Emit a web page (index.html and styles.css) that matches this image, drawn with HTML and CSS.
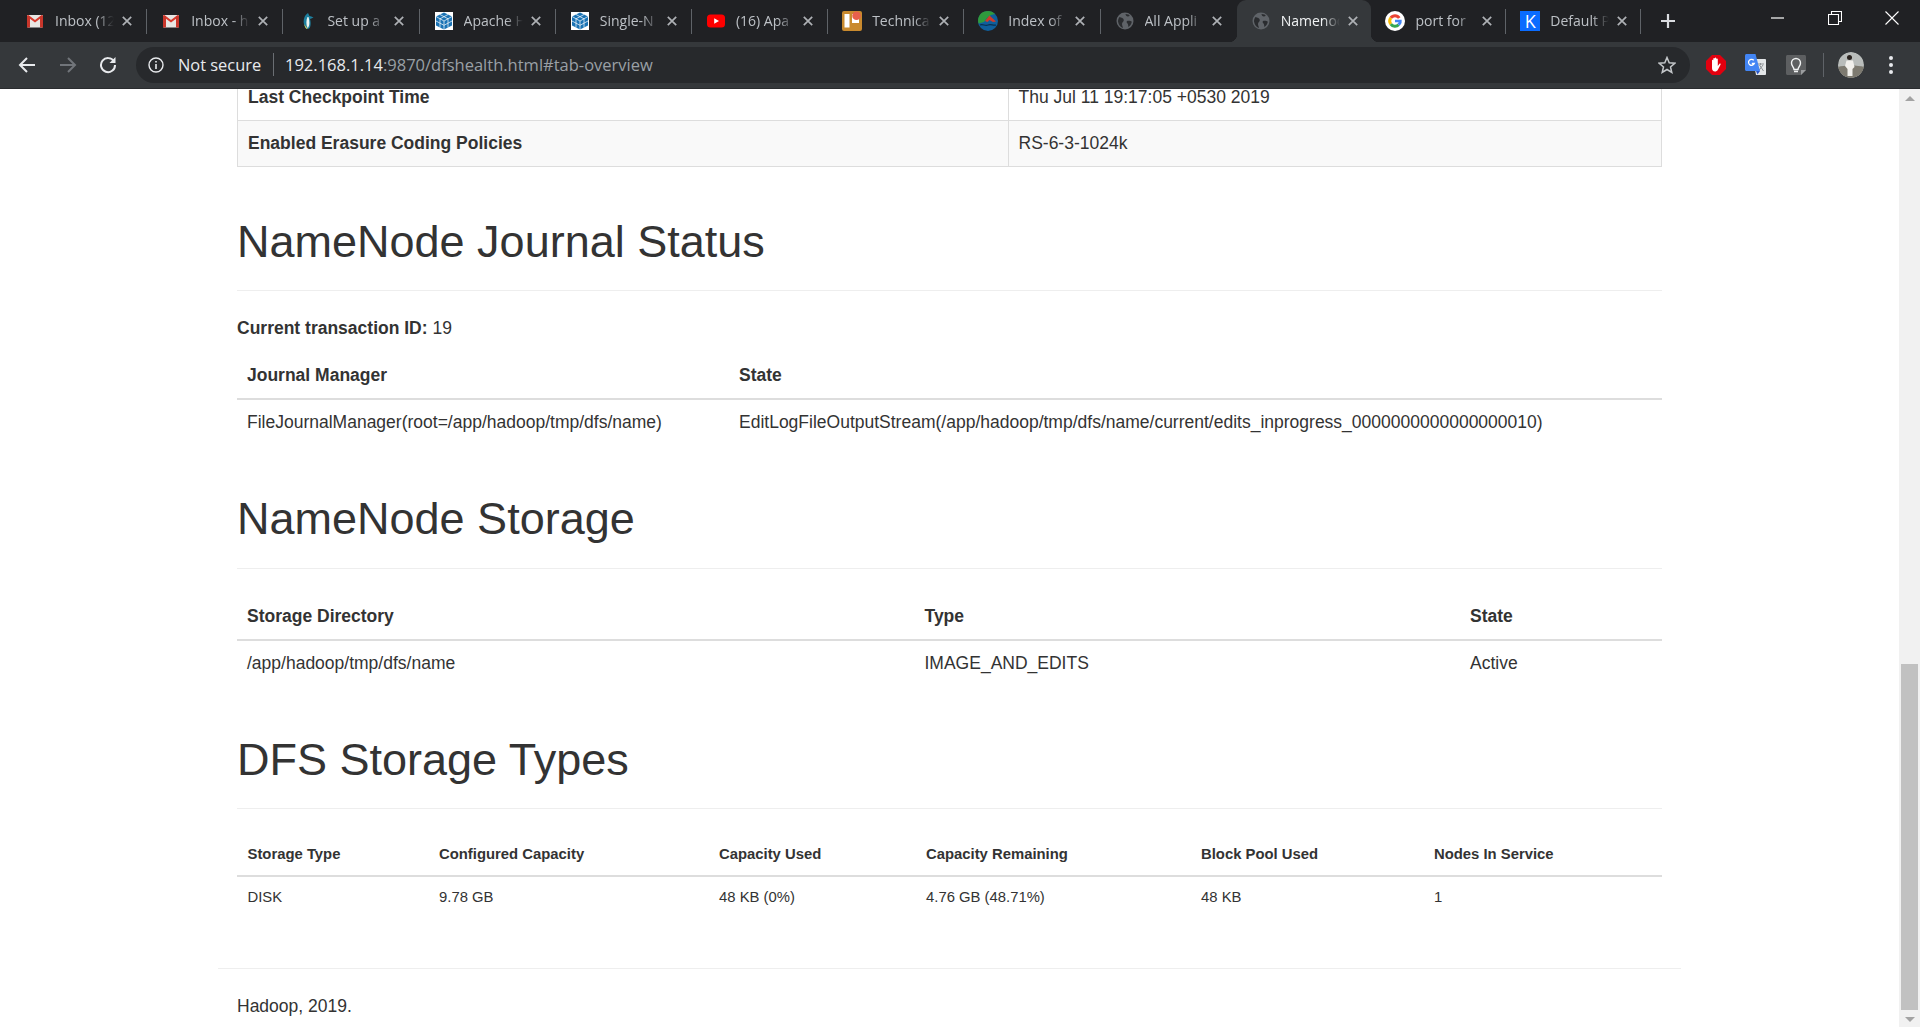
FILE: index.html
```html
<!DOCTYPE html>
<html lang="en">
<head>
<meta charset="UTF-8" />
<title>Namenode information</title>
<link rel="stylesheet" href="styles.css">
</head>
<body>

<svg class="defs" width="0" height="0">
	<symbol id="ico-gmail" viewBox="0 0 18 18">
		<rect x="1" y="3" width="16" height="12.5" rx="1" fill="#e8e6e3"/>
		<path d="M1 4.5 9 10.5 17 4.5V3.500L15.600 3 9 8 2.400 3 1 3.500Z" fill="#d8392c"/>
		<rect x="1" y="4" width="3" height="11.500" fill="#c9362b"/>
		<rect x="14" y="4" width="3" height="11.500" fill="#c9362b"/>
	</symbol>
	<symbol id="ico-cube" viewBox="0 0 18 18">
		<rect width="18" height="18" fill="#fff"/>
		<path d="M9 .5 17 4.500V13.500L9 17.500 1 13.500V4.500Z" fill="#1a73b5"/>
		<path d="M1 4.500 9 9 17 4.500M9 9V17.500M5 2.500 13 6.800M13 2.500 5 6.800M5 6.800V15.500M13 6.800V15.500M1 9 9 13.300 17 9" fill="none" stroke="#fff" stroke-width=".7"/>
	</symbol>
	<symbol id="ico-globe" viewBox="0 0 18 18">
		<circle cx="9" cy="9" r="8.500" fill="#5f6368"/>
		<path d="M3.500 5C5.500 5.500 7.500 6 7.800 8 8 9.800 6 10 6 12 6 13.500 6.800 14.500 7 16 5 15.500 2.500 13 2 9.500 2 8 2.500 6 3.500 5ZM9.500 2 12.500 2.500 13.800 3.800C12.500 5 10.800 4.600 10.200 3.800 9.800 3 9.500 2.600 9.500 2ZM11 9C12.800 8.500 14.800 8.800 15.800 9.800 15.500 12 14.200 14 12.300 15 12.300 13 12.200 12 11 11 10.500 10.200 10.500 9.500 11 9Z" fill="#2a2c2f"/>
	</symbol>
	<symbol id="ico-close" viewBox="0 0 10 10">
		<path d="M.8.8 9.200 9.200M9.200.8.800 9.200" stroke="#aeb1b5" stroke-width="1.700"/>
	</symbol>
</svg>

<div class="tabstrip">
	<div class="tab">
		<svg class="tab-ico"><use href="#ico-gmail"/></svg>
		<span class="tab-title">Inbox (12</span><svg class="tab-close"><use href="#ico-close"/></svg>
	</div>
	<div class="tab">
		<svg class="tab-ico"><use href="#ico-gmail"/></svg>
		<span class="tab-title">Inbox - h</span><svg class="tab-close"><use href="#ico-close"/></svg>
	</div>
	<div class="tab">
		<svg class="tab-ico" viewBox="0 0 18 18">
			<path d="M10 1C6.500 3 5 8 6 12 6.500 15 8 17 9.500 17 12.500 17 13.500 12 12 7 13.500 6.500 14.500 6 15.500 5.500 14 4.800 12.500 4.300 11.500 4Z" fill="#1d7f9e"/>
			<path d="M9.500 5C8 8 8 13 9.500 16 11.500 15 12 10 10.500 5Z" fill="#eef4f0"/>
			<path d="M6.200 12C6.700 15 8 17 9.500 17 8.500 15.500 7.500 14 6.200 12Z" fill="#e4cf4a"/>
		</svg>
		<span class="tab-title">Set up a</span><svg class="tab-close"><use href="#ico-close"/></svg>
	</div>
	<div class="tab">
		<svg class="tab-ico"><use href="#ico-cube"/></svg>
		<span class="tab-title">Apache H</span><svg class="tab-close"><use href="#ico-close"/></svg>
	</div>
	<div class="tab">
		<svg class="tab-ico"><use href="#ico-cube"/></svg>
		<span class="tab-title">Single-N</span><svg class="tab-close"><use href="#ico-close"/></svg>
	</div>
	<div class="tab">
		<svg class="tab-ico" viewBox="0 0 18 18">
			<rect y="2.500" width="18" height="13" rx="3.500" fill="#f00"/>
			<path d="M7.200 6.200 12 9 7.200 11.800Z" fill="#fff"/>
		</svg>
		<span class="tab-title">(16) Apa</span><svg class="tab-close"><use href="#ico-close"/></svg>
	</div>
	<div class="tab">
		<svg class="tab-ico tab-ico-big" viewBox="0 0 20 20">
			<rect width="20" height="20" rx="2" fill="#c98a2e"/>
			<rect x="2.500" y="3" width="5" height="13.500" fill="#fff"/>
			<rect x="10" y="3" width="7" height="9" fill="#fff"/>
			<circle cx="14.500" cy="4.800" r="4.300" fill="#e8604c"/>
		</svg>
		<span class="tab-title">Technica</span><svg class="tab-close"><use href="#ico-close"/></svg>
	</div>
	<div class="tab">
		<svg class="tab-ico tab-ico-big" viewBox="0 0 20 20">
			<circle cx="10" cy="10" r="10" fill="#0f5f9c"/>
			<path d="M0 10C0 4 4 0 10 0 13 0 15 1 17 3L13 4 9 7 6 11 .5 12.500Z" fill="#2f9a3d"/>
			<path d="M7 10 11.500 4.500 18 10.500 15 11 11.500 9 9.500 11Z" fill="#cf3b2a"/>
			<path d="M2 14C5 12.500 7 15.500 10 14 13 12.500 15 15 18 14" fill="none" stroke="#0a2f4f" stroke-width="1.200"/>
		</svg>
		<span class="tab-title">Index of</span><svg class="tab-close"><use href="#ico-close"/></svg>
	</div>
	<div class="tab tab-nosep">
		<svg class="tab-ico"><use href="#ico-globe"/></svg>
		<span class="tab-title">All Appli</span><svg class="tab-close"><use href="#ico-close"/></svg>
	</div>
	<div class="tab tab-active">
		<svg class="tab-ico"><use href="#ico-globe"/></svg>
		<span class="tab-title">Namenod</span><svg class="tab-close"><use href="#ico-close"/></svg>
	</div>
	<div class="tab">
		<svg class="tab-ico tab-ico-big" viewBox="0 0 20 20">
			<circle cx="10" cy="10" r="10" fill="#fff"/>
			<path d="M15.500 6.200A6.700 6.700 0 0 0 4.600 6L7 7.800A3.700 3.700 0 0 1 13 7.800Z" fill="#ea4335"/>
			<path d="M4.600 6A6.700 6.700 0 0 0 4.600 14L7 12.200A3.700 3.700 0 0 1 7 7.800Z" fill="#fbbc05"/>
			<path d="M4.600 14A6.700 6.700 0 0 0 14.800 14.700L12.500 12.800A3.700 3.700 0 0 1 7 12.200Z" fill="#34a853"/>
			<path d="M16.700 8.700H10V11.300H13.700A3.500 3.500 0 0 1 12.500 12.800L14.800 14.700A6.700 6.700 0 0 0 16.700 8.700Z" fill="#4285f4"/>
		</svg>
		<span class="tab-title">port for</span><svg class="tab-close"><use href="#ico-close"/></svg>
	</div>
	<div class="tab">
		<span class="tab-k">K</span>
		<span class="tab-title">Default P</span><svg class="tab-close"><use href="#ico-close"/></svg>
	</div>
	<div class="new-tab">
		<svg viewBox="0 0 16 16" width="16" height="16"><path d="M8 1V15M1 8H15" stroke="#dadce0" stroke-width="2.200"/></svg>
	</div>
	<div class="win-controls">
		<div class="win-btn"><svg viewBox="0 0 14 14" width="14" height="14"><path d="M0 7H13" stroke="#fff" stroke-width="1.200"/></svg></div>
		<div class="win-btn"><svg viewBox="0 0 14 14" width="14" height="14"><path d="M.5 3.500H10.500V13.500H.5ZM3.500 3.500V.5H13.500V10.500H10.500" fill="none" stroke="#fff" stroke-width="1.100"/></svg></div>
		<div class="win-btn"><svg viewBox="0 0 14 14" width="14" height="14"><path d="M.5.5 13.500 13.500M13.500.5.5 13.500" stroke="#fff" stroke-width="1.100"/></svg></div>
	</div>
</div>

<div class="toolbar">
	<div class="nav-btn">
		<svg viewBox="0 0 18 18" width="18" height="18"><path d="M17 9H2M9 2 2 9 9 16" fill="none" stroke="#e8eaed" stroke-width="2"/></svg>
	</div>
	<div class="nav-btn">
		<svg viewBox="0 0 18 18" width="18" height="18"><path d="M1 9H16M9 2 16 9 9 16" fill="none" stroke="#71757a" stroke-width="2"/></svg>
	</div>
	<div class="nav-btn">
		<svg viewBox="0 0 18 18" width="18" height="18"><path d="M15 5.500A7 7 0 1 0 16 9" fill="none" stroke="#e8eaed" stroke-width="2"/><path d="M16.500 1V7H10.500Z" fill="#e8eaed"/></svg>
	</div>
	<div class="omnibox">
		<svg class="omni-info" viewBox="0 0 16 16" width="16" height="16"><circle cx="8" cy="8" r="7" fill="none" stroke="#e8eaed" stroke-width="1.400"/><path d="M8 7V12M8 4V5.600" stroke="#e8eaed" stroke-width="1.600"/></svg>
		<span class="omni-secure">Not secure</span>
		<span class="omni-url"><span class="omni-host">192.168.1.14</span>:9870/dfshealth.html#tab-overview</span>
		<svg class="omni-star" viewBox="0 0 18 18" width="18" height="18"><path d="M9 1.500 11.200 6.700 16.800 7.200 12.500 10.900 13.800 16.400 9 13.500 4.200 16.400 5.500 10.900 1.200 7.200 6.800 6.700Z" fill="none" stroke="#c4c7ca" stroke-width="1.500"/></svg>
	</div>
	<div class="ext ext-first">
		<svg viewBox="0 0 20 20" width="20" height="20">
			<path d="M6 0H14L20 6V14L14 20H6L0 14V6Z" fill="#e2000f"/>
			<path d="M6 9V5.500C6 4.500 7.300 4.500 7.300 5.500V9 3.800C7.300 2.800 8.800 2.800 8.800 3.800V9 3.300C8.800 2.300 10.300 2.300 10.300 3.300V9 4.300C10.300 3.300 11.800 3.300 11.800 4.300V11L13.300 9C14 8 15 8.800 14.500 9.700L12 14.500C11.300 16 10 16.500 9 16.500 7 16.500 6 15 6 13Z" fill="#fff"/>
		</svg>
	</div>
	<div class="ext">
		<svg viewBox="0 0 22 22" width="22" height="22">
			<path d="M8 5H20C20.500 5 21 5.500 21 6V20C21 20.500 20.500 21 20 21H11Z" fill="#e3e6e8"/>
			<path d="M12 10H19M15.500 9V11M13.500 17 18 11M14.500 11 18.500 17" stroke="#8d9296" stroke-width="1" fill="none"/>
			<path d="M1.500 0H10.500L15 17H1.500C.7 17 0 16.300 0 15.500V1.500C0 .7.700 0 1.500 0Z" fill="#4285f4"/>
			<path d="M8.800 6.300A3 3 0 1 0 9.300 9.500H6.800" fill="none" stroke="#fff" stroke-width="1.300"/>
			<path d="M11 17 12.500 20.500 15 17Z" fill="#2a56c6"/>
		</svg>
	</div>
	<div class="ext">
		<svg viewBox="0 0 20 20" width="20" height="20">
			<path d="M1.500 0H18.500C19.300 0 20 .7 20 1.500V15L15 20H1.500C.7 20 0 19.300 0 18.500V1.500C0 .7.700 0 1.500 0Z" fill="#5d5f61"/>
			<path d="M15 20V15H20Z" fill="#9a9c9e"/>
			<path d="M8 14.500C8 12 5.500 11 5.500 8A4.500 4.500 0 0 1 14.500 8C14.500 11 12 12 12 14.500ZM8 16.500H12" fill="none" stroke="#f1f3f4" stroke-width="1.400"/>
		</svg>
	</div>
	<div class="toolbar-sep"></div>
	<div class="avatar">
		<svg viewBox="0 0 26 26" width="26" height="26">
			<circle cx="13" cy="13" r="13" fill="#b9bdbb"/>
			<path d="M0 15C6 13 20 13 26 15 25 22 19 26 13 26 7 26 1 22 0 15Z" fill="#7d7a70"/>
			<circle cx="11.500" cy="5.500" r="2.500" fill="#2b2420"/>
			<path d="M8.500 8.500H15L16.500 15 14.500 17V24H9.500V17L7 14Z" fill="#f1f0ec"/>
		</svg>
	</div>
	<div class="menu-dots"><i></i><i></i><i></i></div>
</div>

<div class="viewport">
	<div class="page">
		<div class="container">
			<table class="table table-bordered table-striped">
				<col class="col-overview">
				<col>
				<tr>
					<th>Last Checkpoint Time</th>
					<td>Thu Jul 11 19:17:05 +0530 2019</td>
				</tr>
				<tr>
					<th>Enabled Erasure Coding Policies</th>
					<td>RS-6-3-1024k</td>
				</tr>
			</table>

			<div class="page-header"><h1>NameNode Journal Status</h1></div>
			<p class="txid"><b>Current transaction ID:</b> 19</p>
			<table class="table">
				<col class="col-journal">
				<col>
				<thead>
					<tr>
						<th>Journal Manager</th>
						<th>State</th>
					</tr>
				</thead>
				<tbody>
					<tr>
						<td>FileJournalManager(root=/app/hadoop/tmp/dfs/name)</td>
						<td>EditLogFileOutputStream(/app/hadoop/tmp/dfs/name/current/edits_inprogress_0000000000000000010)</td>
					</tr>
				</tbody>
			</table>

			<div class="page-header"><h1>NameNode Storage</h1></div>
			<table class="table">
				<col class="col-dir">
				<col class="col-type">
				<col>
				<thead>
					<tr>
						<th>Storage Directory</th>
						<th>Type</th>
						<th>State</th>
					</tr>
				</thead>
				<tbody>
					<tr>
						<td>/app/hadoop/tmp/dfs/name</td>
						<td>IMAGE_AND_EDITS</td>
						<td>Active</td>
					</tr>
				</tbody>
			</table>

			<div class="page-header"><h1>DFS Storage Types</h1></div>
			<table class="table table-small">
				<col class="col-s1">
				<col class="col-s2">
				<col class="col-s3">
				<col class="col-s4">
				<col class="col-s5">
				<col>
				<thead>
					<tr>
						<th>Storage Type</th>
						<th>Configured Capacity</th>
						<th>Capacity Used</th>
						<th>Capacity Remaining</th>
						<th>Block Pool Used</th>
						<th>Nodes In Service</th>
					</tr>
				</thead>
				<tbody>
					<tr>
						<td>DISK</td>
						<td>9.78 GB</td>
						<td>48 KB (0%)</td>
						<td>4.76 GB (48.71%)</td>
						<td>48 KB</td>
						<td>1</td>
					</tr>
				</tbody>
			</table>
		</div>

		<div class="footer-wrap">
			<hr class="footer-rule" />
			<p class="footer-text">Hadoop, 2019.</p>
		</div>
	</div>

	<div class="scrollbar">
		<div class="arrow-up"></div>
		<div class="thumb"></div>
		<div class="arrow-down"></div>
	</div>
</div>

</body>
</html>
```

FILE: styles.css
```css
html, body {
	height: 100%;
	margin: 0;
	overflow: hidden;
}
body {
	display: flex;
	flex-direction: column;
	font-family: "Liberation Sans", Arial, sans-serif;
	color: #333;
	background-color: #fff;
}
.defs {
	position: absolute;
}

/* tab strip */
.tabstrip {
	display: flex;
	align-items: center;
	flex: none;
	height: 42px;
	padding-left: 11px;
	background-color: #202124;
	font-family: "Open Sans", "Noto Sans", sans-serif;
	font-size: 14px;
}
.tab {
	display: flex;
	align-items: center;
	flex: none;
	box-sizing: border-box;
	width: 136.2px;
	height: 25px;
	padding-left: 15px;
	border-right: 1px solid #5f6368;
	color: #bdc1c6;
}
.tab-active,
.tab-active ~ .tab {
	width: 134.8px;
}
.tab-nosep {
	border-right-color: transparent;
}
.tab-active {
	position: relative;
	height: 42px;
	border-right: 0;
	border-radius: 9px 9px 0 0;
	background-color: #35383b;
	color: #f1f3f4;
}
.tab-active:before,
.tab-active:after {
	content: "";
	position: absolute;
	bottom: 0;
	width: 8px;
	height: 8px;
}
.tab-active:before {
	left: -8px;
	background: radial-gradient(circle at 0 0, transparent 8px, #35383b 8.5px);
}
.tab-active:after {
	right: -8px;
	background: radial-gradient(circle at 100% 0, transparent 8px, #35383b 8.5px);
}
.tab-ico {
	flex: none;
	width: 18px;
	height: 18px;
	margin-right: 11px;
}
.tab-ico-big {
	width: 20px;
	height: 20px;
	margin-left: -1px;
	margin-right: 10px;
}
.tab-k {
	flex: none;
	width: 20px;
	height: 20px;
	margin-left: -1px;
	margin-right: 10px;
	background-color: #0a6cff;
	color: #fff;
	font-size: 18px;
	line-height: 20px;
	text-align: center;
}
.tab-title {
	flex: none;
	width: 60px;
	padding-bottom: 2px;
	overflow: hidden;
	white-space: nowrap;
	-webkit-mask-image: linear-gradient(to right, #000 70%, transparent 98%);
	mask-image: linear-gradient(to right, #000 70%, transparent 98%);
}
.tab-close {
	flex: none;
	width: 10px;
	height: 10px;
	margin-left: 7px;
}
.new-tab {
	display: flex;
	flex: none;
	margin-left: 19px;
}
.win-controls {
	display: flex;
	align-self: flex-start;
	margin-left: auto;
}
.win-btn {
	display: flex;
	align-items: center;
	justify-content: center;
	width: 57px;
	height: 36px;
}

/* toolbar */
.toolbar {
	display: flex;
	align-items: center;
	flex: none;
	height: 47px;
	padding: 0 0 1px 7px;
	box-sizing: border-box;
	background-color: #35383b;
	border-bottom: 1px solid #2a2c2f;
}
.nav-btn {
	display: flex;
	align-items: center;
	justify-content: center;
	flex: none;
	width: 40.5px;
}
.omnibox {
	display: flex;
	align-items: center;
	flex: none;
	box-sizing: border-box;
	width: 1554px;
	height: 36px;
	margin-left: 7.5px;
	padding: 0 14px 0 12px;
	border-radius: 18px;
	background-color: #27292c;
	font-family: "Open Sans", "Noto Sans", sans-serif;
	color: #9aa0a6;
}
.omni-info {
	flex: none;
	margin-right: 14px;
}
.omni-secure {
	flex: none;
	width: 95px;
	border-right: 1px solid #6a6e73;
	color: #e8eaed;
	font-size: 16.4px;
	line-height: 23px;
	white-space: nowrap;
}
.omni-url {
	flex: none;
	margin-left: 11px;
	font-size: 16.5px;
}
.omni-host {
	color: #e8eaed;
}
.omni-star {
	flex: none;
	margin-left: auto;
}
.ext {
	display: flex;
	align-items: center;
	justify-content: center;
	flex: none;
	width: 40px;
}
.ext-first {
	margin-left: 6px;
}
.toolbar-sep {
	flex: none;
	width: 1px;
	height: 24px;
	margin: 0 14px 0 7px;
	background-color: #5f6368;
}
.avatar {
	display: flex;
	flex: none;
	width: 26px;
	height: 26px;
	border-radius: 50%;
	overflow: hidden;
}
.menu-dots {
	display: flex;
	flex-direction: column;
	align-items: center;
	gap: 3px;
	flex: none;
	margin-left: 25px;
}
.menu-dots i {
	width: 4px;
	height: 4px;
	border-radius: 50%;
	background-color: #e8eaed;
}

/* page content, at 125% of bootstrap sizes */
.viewport {
	display: flex;
	flex: 1;
	min-height: 0;
	overflow: hidden;
}
.page {
	flex: 1;
	min-width: 0;
	font-size: 17.5px;
	line-height: 25px;
}
.container {
	box-sizing: border-box;
	width: 1462.5px;
	margin: -15px auto 0;
	padding: 0 18.75px;
}
.table {
	width: 100%;
	table-layout: fixed;
	border-collapse: collapse;
	border-spacing: 0;
}
.table th,
.table td {
	padding: 10px;
	text-align: left;
	vertical-align: top;
}
.table thead th {
	border-bottom: 2.5px solid #ddd;
}
.table-bordered th,
.table-bordered td {
	border: 1.25px solid #ddd;
}
.table-striped tr:nth-child(odd) {
	background-color: #fff;
}
.table-striped tr:last-child {
	background-color: #f9f9f9;
}
.table-small {
	font-size: 14.85px;
	line-height: 21px;
}
.table-small th,
.table-small td {
	padding-left: 10.5px;
}
.col-overview { width: 770.5px; }
.col-journal { width: 492px; }
.col-dir { width: 677.5px; }
.col-type { width: 545.5px; }
.col-s1 { width: 191.5px; }
.col-s2 { width: 280px; }
.col-s3 { width: 207px; }
.col-s4 { width: 275px; }
.col-s5 { width: 233px; }

.page-header {
	margin: 49px 0 25px;
	padding-bottom: 11.25px;
	border-bottom: 1.25px solid #eee;
}
.table-bordered + .page-header {
	margin-top: 50px;
}
.page-header h1 {
	margin: 0 0 12.5px;
	font-size: 45px;
	font-weight: 500;
	line-height: 49.5px;
}
.txid {
	margin: 0 0 12px;
}
.footer-wrap {
	width: 1462.5px;
	margin: 50px auto 0;
}
.footer-rule {
	height: 1.25px;
	margin: 0;
	border: 0;
	background-color: #eee;
}
.footer-text {
	margin: 25px 0 0;
	padding-left: 18.75px;
}

/* scrollbar */
.scrollbar {
	display: flex;
	flex-direction: column;
	align-items: center;
	flex: none;
	width: 21px;
	background-color: #f1f1f1;
}
.arrow-up,
.arrow-down {
	flex: none;
	width: 0;
	height: 0;
	border-left: 5px solid transparent;
	border-right: 5px solid transparent;
}
.arrow-up {
	margin: 7px 0 auto;
	border-bottom: 5px solid #a3a3a3;
}
.arrow-down {
	margin: 7px 0 5px;
	border-top: 5px solid #a3a3a3;
}
.thumb {
	flex: none;
	width: 17px;
	height: 346px;
	background-color: #c1c1c1;
}
```
